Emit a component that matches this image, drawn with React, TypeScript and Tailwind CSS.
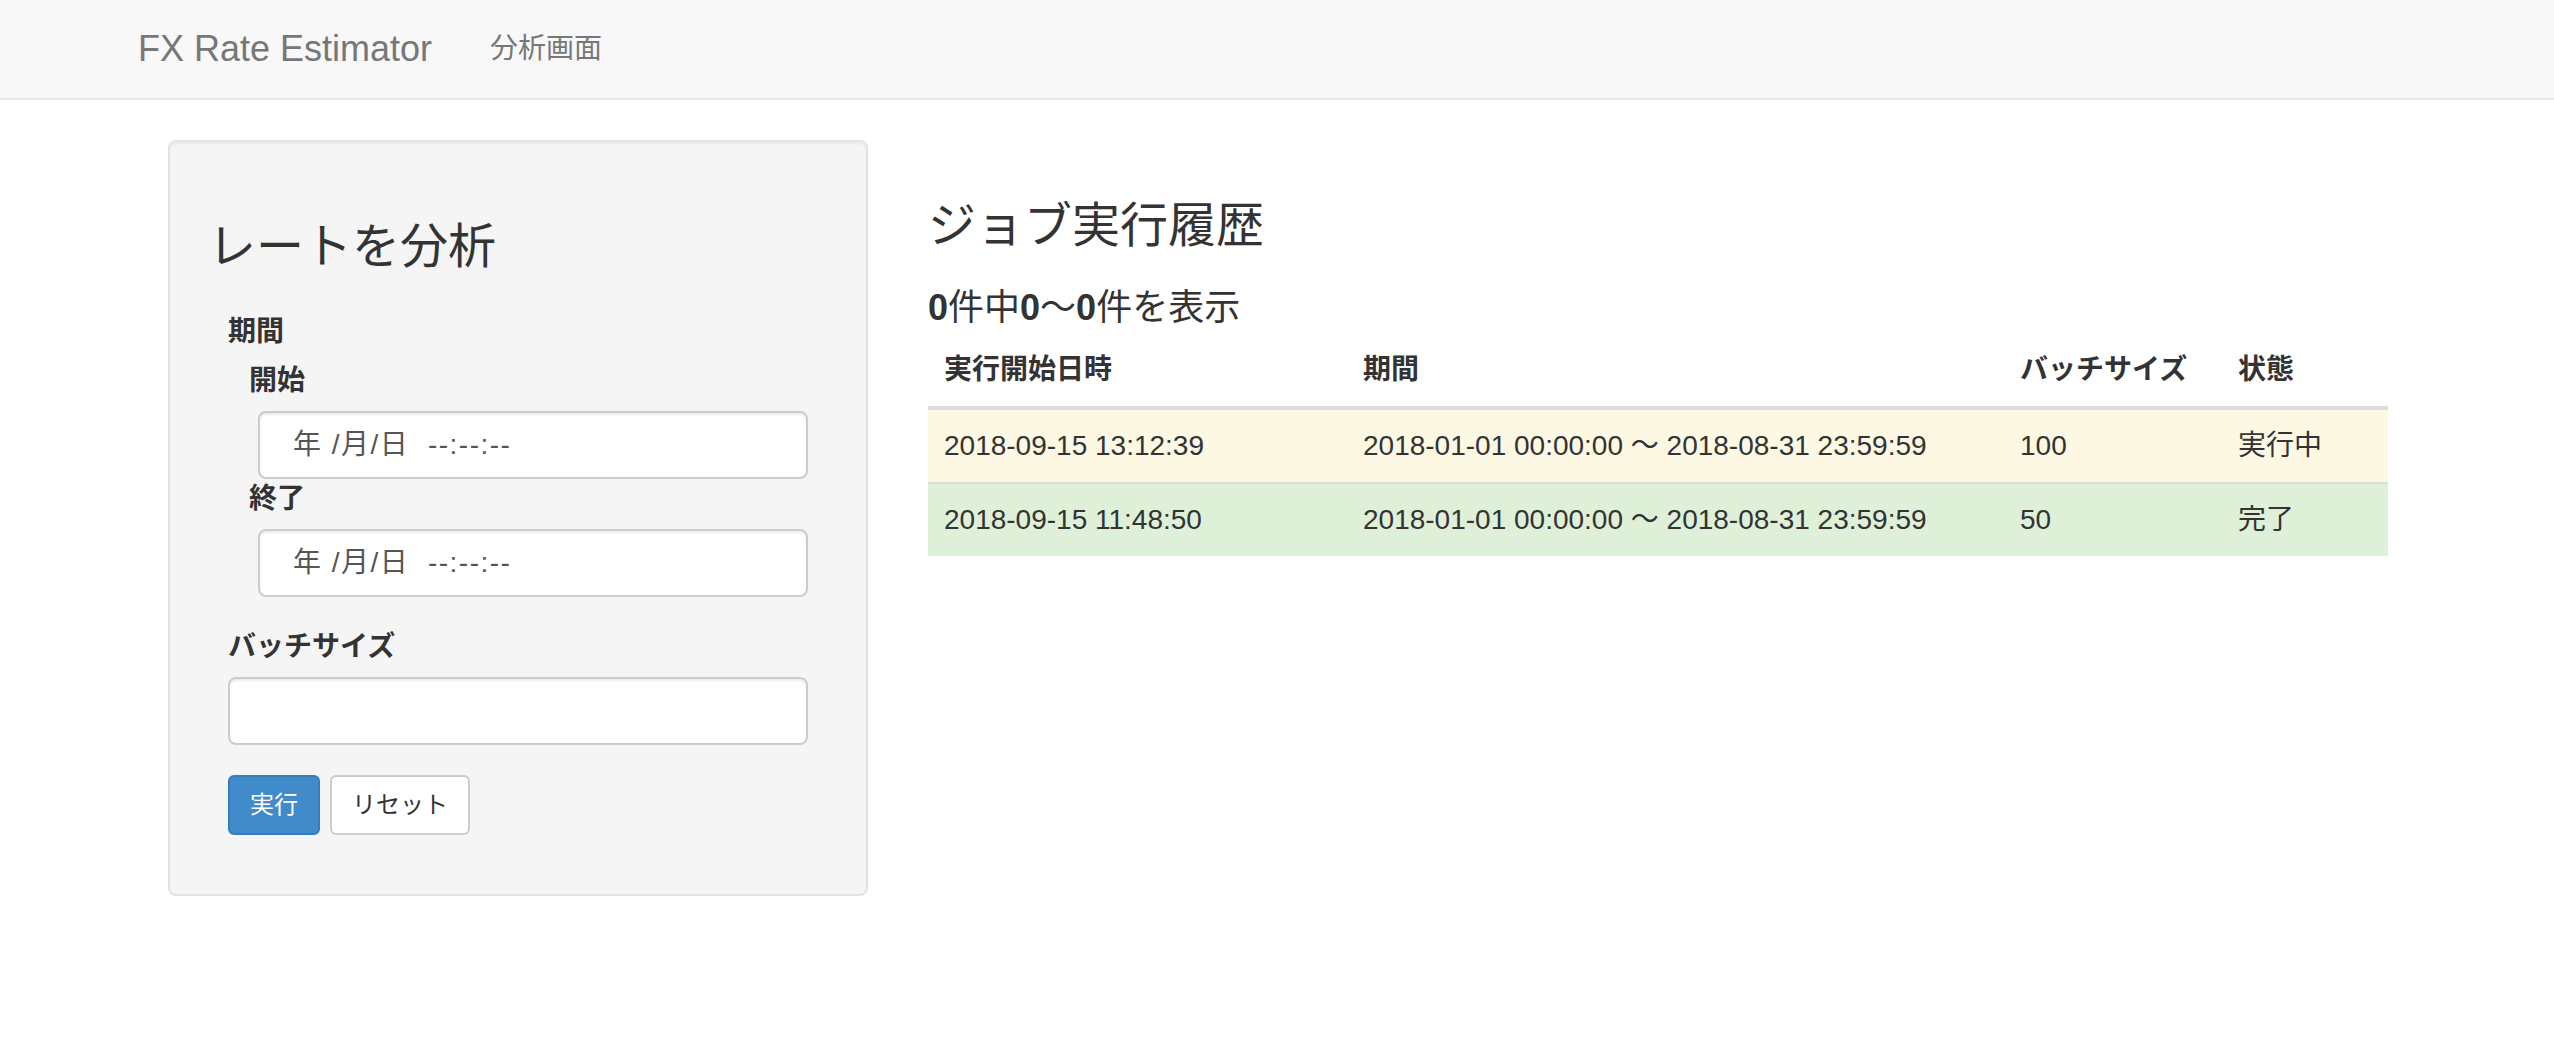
import React from "react"

const font = { fontFamily: '"Liberation Sans", "Noto Sans CJK JP", sans-serif' }

interface Job {
  started: string
  range: string
  batch: string
  status: string
  tone: "warning" | "success"
}

const jobs: Job[] = [
  {
    started: "2018-09-15 13:12:39",
    range: "2018-01-01 00:00:00 〜 2018-08-31 23:59:59",
    batch: "100",
    status: "実行中",
    tone: "warning",
  },
  {
    started: "2018-09-15 11:48:50",
    range: "2018-01-01 00:00:00 〜 2018-08-31 23:59:59",
    batch: "50",
    status: "完了",
    tone: "success",
  },
]

const DateField = () => (
  <div className="ml-[30px] h-[68px] w-[550px] rounded-[8px] border-2 border-[#ccc] bg-white shadow-[inset_0_2px_2px_rgba(0,0,0,0.075)] flex items-center pl-[33px]">
    <span className="whitespace-pre text-[28px] leading-[40px] tracking-[1.5px] text-[#555]">{"年 /月/日  --:--:--"}</span>
  </div>
)

export default function App() {
  return (
    <div className="min-h-screen bg-white text-[#333]" style={font}>
      {/* Navbar */}
      <nav className="h-[100px] bg-[#f8f8f8] border-b-2 border-[#e7e7e7] flex items-center pl-[138px]">
        <span className="text-[36px] leading-[40px] text-[#777]">FX Rate Estimator</span>
        <span className="ml-[58px] text-[28px] leading-[40px] text-[#777]">分析画面</span>
      </nav>

      <div className="flex items-start pl-[168px] pt-[40px]">
        {/* Form well */}
        <div className="w-[700px] rounded-[8px] border-2 border-[#e3e3e3] bg-[#f5f5f5] shadow-[inset_0_2px_2px_rgba(0,0,0,0.05)] px-[38px] pt-[38px] pb-[59px]">
          <h3 className="mt-[40px] text-[48px] leading-[53px] font-normal">レートを分析</h3>

          <div className="ml-[20px] mr-[19px] mt-[39px] flex flex-col">
            <label className="text-[28px] leading-[40px] font-bold">期間</label>
            <label className="ml-[21px] mt-[9px] mb-[10px] text-[28px] leading-[40px] font-bold">開始</label>
            <DateField />
            <label className="ml-[21px] mb-[10px] text-[28px] leading-[40px] font-bold">終了</label>
            <DateField />

            <label className="mt-[30px] mb-[10px] text-[28px] leading-[40px] font-bold">バッチサイズ</label>
            <div className="h-[68px] w-[580px] rounded-[8px] border-2 border-[#ccc] bg-white shadow-[inset_0_2px_2px_rgba(0,0,0,0.075)]" />

            <div className="mt-[30px] flex gap-[10px]">
              <button className="h-[60px] rounded-[6px] border-2 border-[#357ebd] bg-[#428bca] px-[20px] text-[24px] leading-[36px] text-white">
                実行
              </button>
              <button className="h-[60px] rounded-[6px] border-2 border-[#ccc] bg-white px-[20px] text-[24px] leading-[36px] text-[#333]">
                リセット
              </button>
            </div>
          </div>
        </div>

        {/* Job history */}
        <div className="ml-[60px] w-[1460px] flex flex-col">
          <h3 className="mt-[59px] text-[48px] leading-[53px] font-normal">ジョブ実行履歴</h3>
          <h4 className="mt-[36px] text-[36px] leading-[40px] font-normal">
            <b>0</b>件中<b>0</b>〜<b>0</b>件を表示
          </h4>

          <table className="mt-[6px] w-[1460px] table-fixed border-collapse text-[28px] leading-[40px]">
            <colgroup>
              <col className="w-[419px]" />
              <col className="w-[657px]" />
              <col className="w-[218px]" />
              <col className="w-[166px]" />
            </colgroup>
            <thead>
              <tr className="border-b-4 border-[#ddd]">
                <th className="p-[16px] text-left font-bold">実行開始日時</th>
                <th className="p-[16px] text-left font-bold">期間</th>
                <th className="p-[16px] text-left font-bold">バッチサイズ</th>
                <th className="p-[16px] text-left font-bold">状態</th>
              </tr>
            </thead>
            <tbody>
              {jobs.map((job, i) => (
                <tr
                  key={i}
                  className={`${i > 0 ? "border-t-2 border-[#ddd]" : ""} ${
                    job.tone === "warning" ? "bg-[#fcf8e3]" : "bg-[#dff0d8]"
                  }`}
                >
                  <td className="p-[16px] whitespace-nowrap">{job.started}</td>
                  <td className="p-[16px] whitespace-nowrap">{job.range}</td>
                  <td className="p-[16px]">{job.batch}</td>
                  <td className="p-[16px]">{job.status}</td>
                </tr>
              ))}
            </tbody>
          </table>
        </div>
      </div>
    </div>
  )
}
